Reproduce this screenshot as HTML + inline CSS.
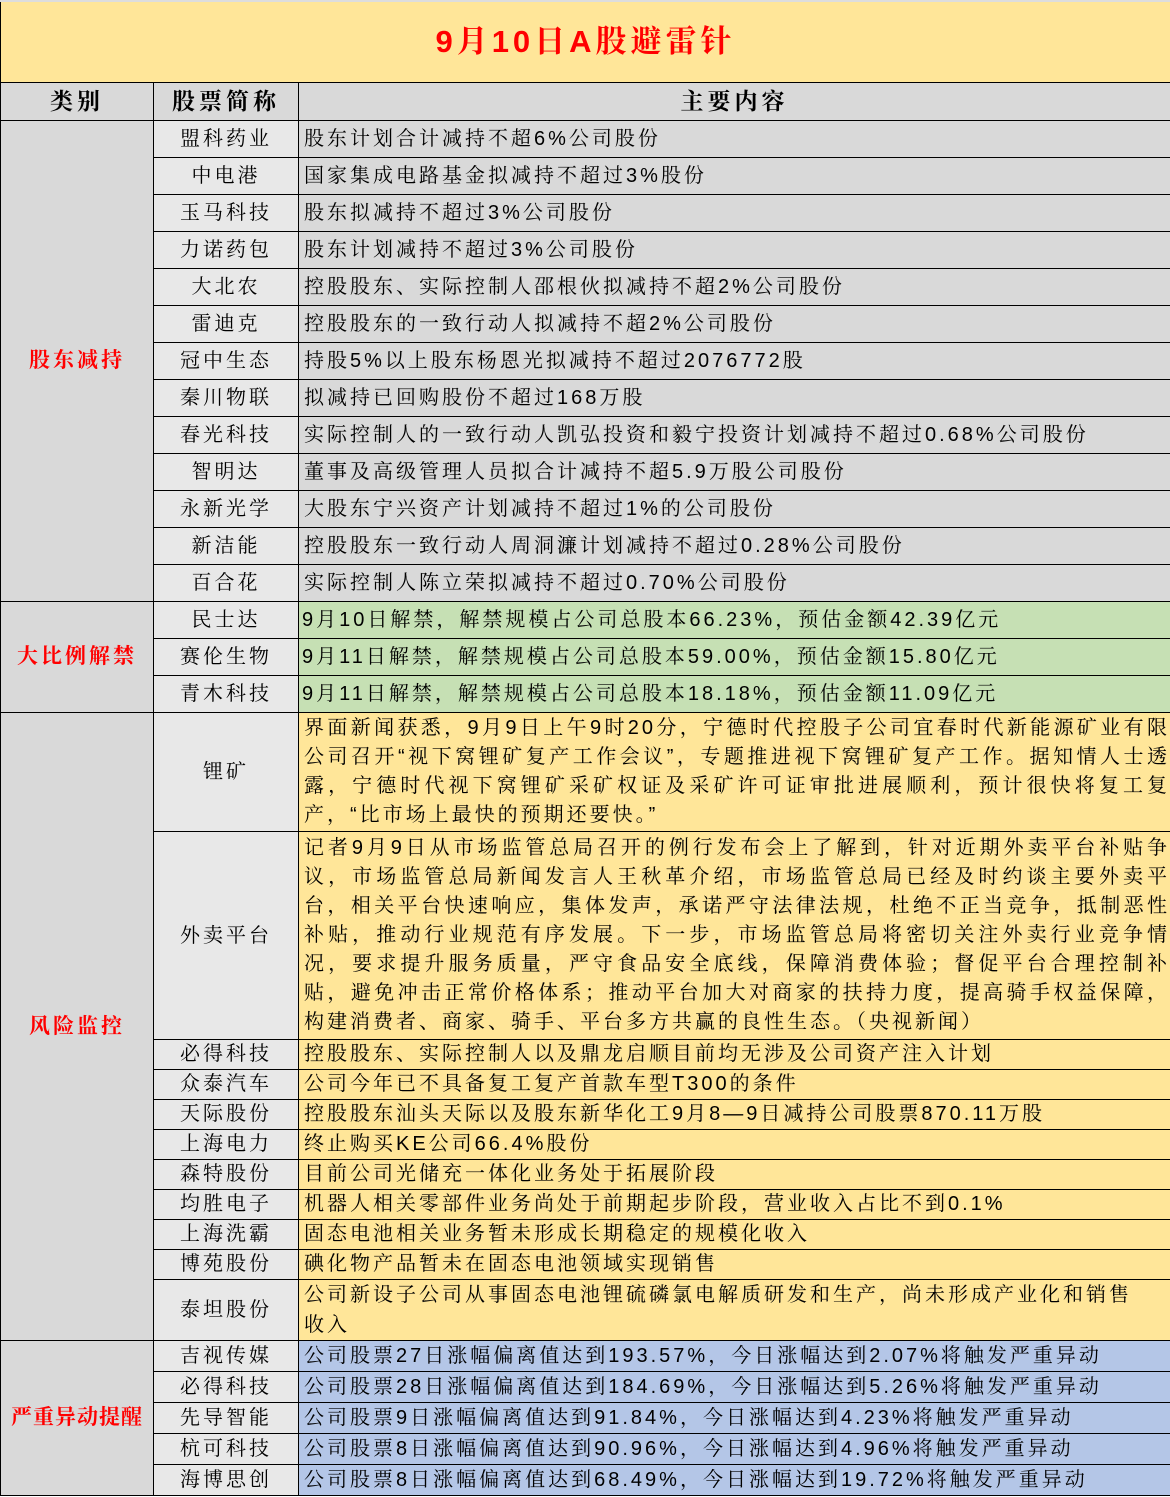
<!DOCTYPE html>
<html><head><meta charset="utf-8"><style>
body{margin:0;width:1170px;height:1497px;background:#fff;overflow:hidden;font-family:"Liberation Sans","Noto Serif CJK SC",serif;}
table{border-collapse:collapse;table-layout:fixed;width:1170px;position:absolute;left:0;top:0;}
td{border:1px solid #000;padding:0;font-size:20px;letter-spacing:3px;color:#000;overflow:hidden;line-height:30px;}
.t{background:#FFE699;height:80px;text-align:center;color:#f00;font-weight:bold;font-size:31px;letter-spacing:4px;border-top:2px solid #ddd;}
.h{background:#D9D9D9;height:37px;line-height:37px;text-align:center;font-weight:bold;font-size:23px;letter-spacing:4px;}
.c{background:#D9D9D9;text-align:center;color:#f00;font-weight:bold;font-size:21px;letter-spacing:3px;}
.n{background:#E8E8E8;text-align:center;}
.g1{background:#D9D9D9;padding-left:5px;}
.gr{background:#C6E0B4;padding-left:3px;}
.y{background:#FFE699;padding-left:5px;text-align:justify;}
.m{line-height:29px;}
.b{background:#B4C6E7;padding-left:5px;}
tr.r37 td{height:36px;}
tr.r30 td{height:29px;line-height:29px;}
tr.r31 td{height:30px;}
</style></head><body>
<table>
<colgroup><col style="width:153px"><col style="width:145px"><col style="width:872px"></colgroup>
<tr><td class="t" colspan="3">9月10日A股避雷针</td></tr>
<tr><td class="h">类别</td><td class="h">股票简称</td><td class="h">主要内容</td></tr>
<tr class="r37"><td class="c" rowspan="13">股东减持</td><td class="n">盟科药业</td><td class="g1">股东计划合计减持不超6%公司股份</td></tr>
<tr class="r37"><td class="n">中电港</td><td class="g1">国家集成电路基金拟减持不超过3%股份</td></tr>
<tr class="r37"><td class="n">玉马科技</td><td class="g1">股东拟减持不超过3%公司股份</td></tr>
<tr class="r37"><td class="n">力诺药包</td><td class="g1">股东计划减持不超过3%公司股份</td></tr>
<tr class="r37"><td class="n">大北农</td><td class="g1">控股股东、实际控制人邵根伙拟减持不超2%公司股份</td></tr>
<tr class="r37"><td class="n">雷迪克</td><td class="g1">控股股东的一致行动人拟减持不超2%公司股份</td></tr>
<tr class="r37"><td class="n">冠中生态</td><td class="g1">持股5%以上股东杨恩光拟减持不超过2076772股</td></tr>
<tr class="r37"><td class="n">秦川物联</td><td class="g1">拟减持已回购股份不超过168万股</td></tr>
<tr class="r37"><td class="n">春光科技</td><td class="g1">实际控制人的一致行动人凯弘投资和毅宁投资计划减持不超过0.68%公司股份</td></tr>
<tr class="r37"><td class="n">智明达</td><td class="g1">董事及高级管理人员拟合计减持不超5.9万股公司股份</td></tr>
<tr class="r37"><td class="n">永新光学</td><td class="g1">大股东宁兴资产计划减持不超过1%的公司股份</td></tr>
<tr class="r37"><td class="n">新洁能</td><td class="g1">控股股东一致行动人周洞濂计划减持不超过0.28%公司股份</td></tr>
<tr class="r37"><td class="n">百合花</td><td class="g1">实际控制人陈立荣拟减持不超过0.70%公司股份</td></tr>
<tr class="r37"><td class="c" rowspan="3">大比例解禁</td><td class="n">民士达</td><td class="gr">9月10日解禁，解禁规模占公司总股本66.23%，预估金额42.39亿元</td></tr>
<tr class="r37"><td class="n">赛伦生物</td><td class="gr">9月11日解禁，解禁规模占公司总股本59.00%，预估金额15.80亿元</td></tr>
<tr class="r37"><td class="n">青木科技</td><td class="gr">9月11日解禁，解禁规模占公司总股本18.18%，预估金额11.09亿元</td></tr>
<tr><td class="c" rowspan="11">风险监控</td><td class="n" style="height:118px">锂矿</td><td class="y m">界面新闻获悉，9月9日上午9时20分，宁德时代控股子公司宜春时代新能源矿业有限公司召开“视下窝锂矿复产工作会议”，专题推进视下窝锂矿复产工作。据知情人士透露，宁德时代视下窝锂矿采矿权证及采矿许可证审批进展顺利，预计很快将复工复产，“比市场上最快的预期还要快。”</td></tr>
<tr><td class="n" style="height:207px">外卖平台</td><td class="y m">记者9月9日从市场监管总局召开的例行发布会上了解到，针对近期外卖平台补贴争议，市场监管总局新闻发言人王秋革介绍，市场监管总局已经及时约谈主要外卖平台，相关平台快速响应，集体发声，承诺严守法律法规，杜绝不正当竞争，抵制恶性补贴，推动行业规范有序发展。下一步，市场监管总局将密切关注外卖行业竞争情况，要求提升服务质量，严守食品安全底线，保障消费体验；督促平台合理控制补贴，避免冲击正常价格体系；推动平台加大对商家的扶持力度，提高骑手权益保障，构建消费者、商家、骑手、平台多方共赢的良性生态。（央视新闻）</td></tr>
<tr class="r30"><td class="n">必得科技</td><td class="y">控股股东、实际控制人以及鼎龙启顺目前均无涉及公司资产注入计划</td></tr>
<tr class="r30"><td class="n">众泰汽车</td><td class="y">公司今年已不具备复工复产首款车型T300的条件</td></tr>
<tr class="r30"><td class="n">天际股份</td><td class="y">控股股东汕头天际以及股东新华化工9月8—9日减持公司股票870.11万股</td></tr>
<tr class="r30"><td class="n">上海电力</td><td class="y">终止购买KE公司66.4%股份</td></tr>
<tr class="r30"><td class="n">森特股份</td><td class="y">目前公司光储充一体化业务处于拓展阶段</td></tr>
<tr class="r30"><td class="n">均胜电子</td><td class="y">机器人相关零部件业务尚处于前期起步阶段，营业收入占比不到0.1%</td></tr>
<tr class="r30"><td class="n">上海洗霸</td><td class="y">固态电池相关业务暂未形成长期稳定的规模化收入</td></tr>
<tr class="r30"><td class="n">博苑股份</td><td class="y">碘化物产品暂未在固态电池领域实现销售</td></tr>
<tr><td class="n" style="height:59px">泰坦股份</td><td class="y">公司新设子公司从事固态电池锂硫磷氯电解质研发和生产，尚未形成产业化和销售<br>收入</td></tr>
<tr class="r31"><td class="c" rowspan="5" style="letter-spacing:1px">严重异动提醒</td><td class="n">吉视传媒</td><td class="b">公司股票27日涨幅偏离值达到193.57%，今日涨幅达到2.07%将触发严重异动</td></tr>
<tr class="r31"><td class="n">必得科技</td><td class="b">公司股票28日涨幅偏离值达到184.69%，今日涨幅达到5.26%将触发严重异动</td></tr>
<tr class="r31"><td class="n">先导智能</td><td class="b">公司股票9日涨幅偏离值达到91.84%，今日涨幅达到4.23%将触发严重异动</td></tr>
<tr class="r31"><td class="n">杭可科技</td><td class="b">公司股票8日涨幅偏离值达到90.96%，今日涨幅达到4.96%将触发严重异动</td></tr>
<tr class="r31"><td class="n">海博思创</td><td class="b">公司股票8日涨幅偏离值达到68.49%，今日涨幅达到19.72%将触发严重异动</td></tr>
</table>
</body></html>
